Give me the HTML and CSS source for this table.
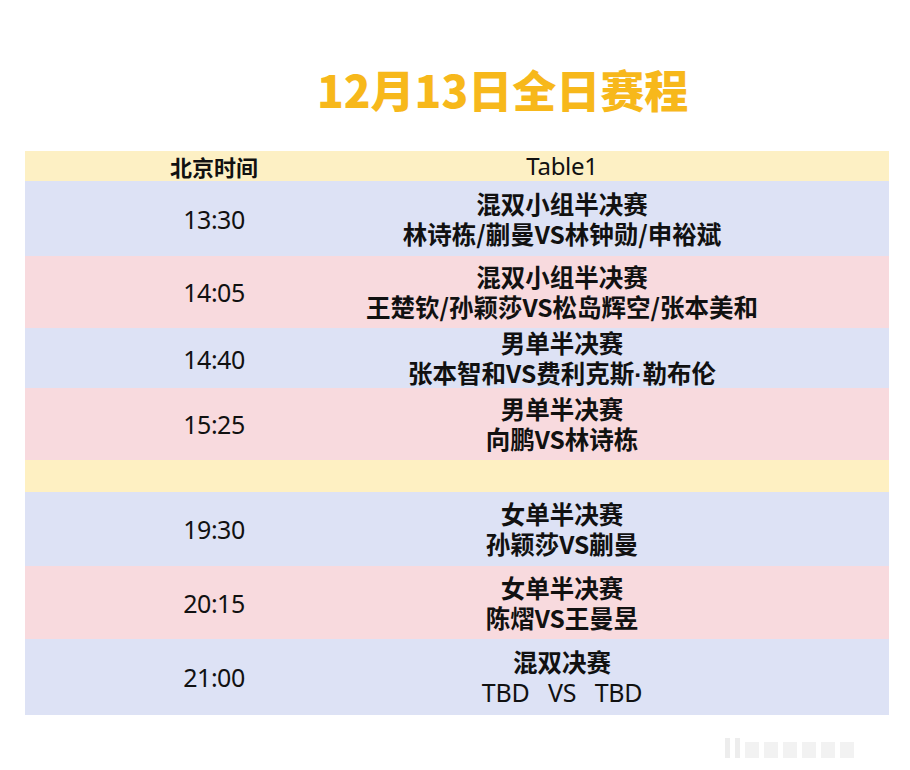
FILE: index.html
```html
<!DOCTYPE html>
<html lang="zh">
<head>
<meta charset="utf-8">
<link rel="stylesheet" href="styles.css">
</head>
<body>
<div class="page">
  <h1 class="title">12月13日全日赛程</h1>
  <div class="table">
    <div class="row head">
      <div class="c1 cn">北京时间</div>
      <div class="c2 latin">Table1</div>
    </div>
    <div class="row blue h75">
      <div class="c1 time">13:30</div>
      <div class="c2 cn two"><span>混双小组半决赛</span><span>林诗栋/蒯曼VS林钟勋/申裕斌</span></div>
    </div>
    <div class="row pink h72">
      <div class="c1 time">14:05</div>
      <div class="c2 cn two"><span>混双小组半决赛</span><span>王楚钦/孙颖莎VS松岛辉空/张本美和</span></div>
    </div>
    <div class="row blue h60">
      <div class="c1 time">14:40</div>
      <div class="c2 cn two"><span>男单半决赛</span><span>张本智和VS费利克斯<b class="dot">·</b>勒布伦</span></div>
    </div>
    <div class="row pink h72">
      <div class="c1 time">15:25</div>
      <div class="c2 cn two"><span>男单半决赛</span><span>向鹏VS林诗栋</span></div>
    </div>
    <div class="row yellow h32"></div>
    <div class="row blue h74">
      <div class="c1 time">19:30</div>
      <div class="c2 cn two"><span>女单半决赛</span><span>孙颖莎VS蒯曼</span></div>
    </div>
    <div class="row pink h73">
      <div class="c1 time">20:15</div>
      <div class="c2 cn two"><span>女单半决赛</span><span>陈熠VS王曼昱</span></div>
    </div>
    <div class="row blue h76">
      <div class="c1 time">21:00</div>
      <div class="c2 two"><span class="cn">混双决赛</span><span class="tbd">TBD&nbsp;&nbsp;&nbsp;VS&nbsp;&nbsp;&nbsp;TBD</span></div>
    </div>
  </div>
  <div class="mark"><i></i><i></i><i class="w"></i><i class="w"></i><i class="w"></i><i class="w"></i><i class="w"></i><i class="w"></i></div>
</div>
</body>
</html>
```
FILE: styles.css
```css
html, body {
  margin: 0;
  padding: 0;
  background: #ffffff;
}
.page {
  width: 910px;
  height: 770px;
  position: relative;
  font-family: "Noto Sans CJK SC", "Noto Sans", sans-serif;
  color: #111;
}
.title {
  margin: 0;
  padding: 67px 0 0 317px;
  height: 151px;
  box-sizing: border-box;
  font-size: 44px;
  line-height: 1;
  font-weight: 900;
  color: #f7b81b;
  letter-spacing: 0;
  font-family: "Noto Sans CJK SC", sans-serif;
}
.table {
  margin: 0 21px 0 25px;
  width: 864px;
}
.row {
  display: grid;
  grid-template-columns: 378px 318px 1fr;
  align-items: center;
}
.head { height: 30px; background: #fdf0c4; }
.blue { background: #dde2f5; }
.pink { background: #f8dade; }
.yellow { background: #fef0c2; }
.h75 { height: 75px; }
.h72 { height: 72px; }
.h60 { height: 60px; }
.h32 { height: 32px; }
.h74 { height: 74px; }
.h73 { height: 73px; }
.h76 { height: 76px; }
.c1, .c2 {
  display: flex;
  justify-content: center;
  align-items: center;
  white-space: nowrap;
}
.two {
  flex-direction: column;
  line-height: 30px;
}
.two span {
  display: block;
  text-align: center;
}
.cn {
  font-family: "Noto Sans CJK SC", sans-serif;
  font-weight: 700;
  font-size: 24.5px;
  color: #111;
}
.dot {
  font-family: "Liberation Sans", sans-serif;
  font-weight: 700;
}
.head .cn {
  font-size: 22px;
  line-height: 30px;
}
.latin {
  font-family: "Noto Sans", "Liberation Sans", sans-serif;
  font-size: 24px;
  line-height: 30px;
  letter-spacing: -0.3px;
  color: #111;
}
.time {
  font-family: "Noto Sans", "Liberation Sans", sans-serif;
  font-size: 25px;
  letter-spacing: -0.5px;
  color: #111;
}
.tbd {
  font-family: "Noto Sans", "Liberation Sans", sans-serif;
  font-size: 25px;
  font-weight: 400;
  letter-spacing: -0.3px;
}
.mark {
  position: absolute;
  left: 725px;
  top: 738px;
  display: flex;
  gap: 5px;
  align-items: flex-end;
  opacity: 0.5;
}
.mark i {
  display: block;
  width: 5px;
  height: 20px;
  background: #dcdcdc;
}
.mark i.w {
  width: 14px;
  height: 16px;
  background: #e6e6e6;
}
```
